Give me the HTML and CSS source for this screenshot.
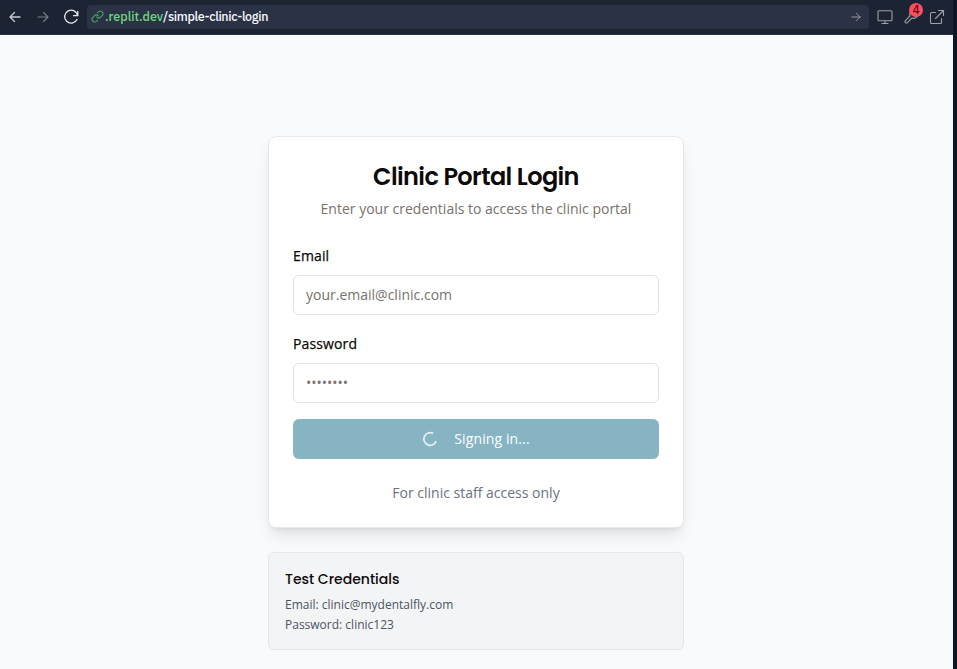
FILE: index.html
```html
<!DOCTYPE html>
<html lang="en">
<head>
<meta charset="utf-8">
<title>Clinic Portal Login</title>
<link rel="stylesheet" href="styles.css">
</head>
<body>
<div class="window">
  <header class="toolbar">
    <svg class="icon back" width="12" height="12" viewBox="0 0 12 12"><path d="M11 6H1M5.500 1.500L1 6l4.500 4.500"/></svg>
    <svg class="icon forward" width="12" height="12" viewBox="0 0 12 12"><path d="M1 6h10M6.500 1.500L11 6l-4.500 4.500"/></svg>
    <svg class="icon reload" width="16" height="16" viewBox="0 0 16 16"><path d="M14.800 2.500v4.200h-4.200M14.600 6.600A6.500 6.500 0 1 0 14 10.500"/></svg>
    <div class="address">
      <svg class="icon link" width="13" height="13" viewBox="0 0 24 24"><path d="M10 13a5 5 0 0 0 7.500.5l3.500-3.500a5 5 0 0 0-7-7l-2 2M14 11a5 5 0 0 0-7.500-.5L3 14a5 5 0 0 0 7 7l2-2"/></svg>
      <span class="url"><span class="domain">.replit.dev</span><span class="path">/simple-clinic-login</span></span>
      <svg class="icon go" width="10" height="10" viewBox="0 0 12 12"><path d="M1 6h10M6.500 1.500L11 6l-4.500 4.500"/></svg>
    </div>
    <svg class="icon monitor" width="16" height="16" viewBox="0 0 16 16"><rect x="1" y="1.800" width="14" height="10" rx="1"/><path d="M8 12v2.500M5 14.500h6"/></svg>
    <span class="tools">
      <svg class="icon" width="16" height="16" viewBox="0 0 24 24"><path d="M14.700 6.300a1 1 0 0 0 0 1.400l1.600 1.600a1 1 0 0 0 1.400 0l3.800-3.800a6 6 0 0 1-7.900 7.900l-6.900 6.900a2.100 2.100 0 0 1-3-3l6.900-6.900a6 6 0 0 1 7.900-7.900z"/></svg>
      <span class="badge">4</span>
    </span>
    <svg class="icon external" width="16" height="16" viewBox="0 0 16 16"><path d="M6.500 3.500h-4a1 1 0 0 0-1 1v9a1 1 0 0 0 1 1h9a1 1 0 0 0 1-1v-4M9.500 1.500h5v5M14 2L6.500 9.500"/></svg>
  </header>
  <main class="page">
    <section class="card">
      <h1 class="title">Clinic Portal Login</h1>
      <p class="subtitle">Enter your credentials to access the clinic portal</p>
      <form class="form">
        <div class="field">
          <label for="email">Email</label>
          <input id="email" type="email" placeholder="your.email@clinic.com">
        </div>
        <div class="field">
          <label for="password">Password</label>
          <input id="password" type="password" placeholder="••••••••">
        </div>
        <button class="submit" type="button">
          <svg class="spinner" width="16" height="16" viewBox="0 0 16 16"><path d="M11.200 2.500A6.300 6.300 0 1 0 14.100 10"/></svg>
          <span>Signing in...</span>
        </button>
      </form>
      <p class="note">For clinic staff access only</p>
    </section>
    <section class="credentials">
      <h2>Test Credentials</h2>
      <p>Email: clinic@mydentalfly.com</p>
      <p>Password: clinic123</p>
    </section>
  </main>
</div>
</body>
</html>
```
FILE: styles.css
```css
* { box-sizing: border-box; }
body {
  margin: 0;
  height: 669px;
  overflow: hidden;
  background: #0e1525;
  font-family: "Open Sans", sans-serif;
  font-size: 14px;
  line-height: 20px;
}
h1, h2, p { margin: 0; }
.window { width: 953px; height: 669px; display: flex; flex-direction: column; background: #f9fafb; }

.toolbar {
  height: 35px;
  flex: none;
  display: flex;
  align-items: center;
  padding: 0 8px 1px 9px;
  background: #1c2333;
  border-bottom: 1px solid #2b3245;
}
.icon { flex: none; fill: none; stroke: #9da2a6; stroke-width: 1.1; stroke-linecap: round; stroke-linejoin: round; }
.back { stroke: #c7ccd3; stroke-width: 1.3; }
.forward { margin-left: 16px; stroke: #777d88; }
.reload { margin-left: 14px; stroke: #e8ebee; stroke-width: 1.3; }
.address {
  display: flex;
  align-items: center;
  width: 782px;
  height: 24px;
  margin-left: 8px;
  padding: 0 8px 0 4px;
  border-radius: 4px;
  background: #2b3245;
}
.link { stroke: #4ca765; stroke-width: 2; }
.url { flex: 1; padding: 0 0 2px 1px; font: 500 12.5px/20px "IBM Plex Sans", Inter, sans-serif; }
.domain { color: #6cd97e; }
.path { color: #f5f9fc; letter-spacing: -.35px; }
.monitor { margin-left: 8px; }
.tools { position: relative; display: flex; margin-left: 10px; }
.tools .icon { stroke-width: 1.700; }
.badge {
  position: absolute;
  left: 6px;
  top: -6px;
  width: 14px;
  height: 14px;
  border-radius: 50%;
  background: #ff4f5e;
  color: #5c0710;
  font: 500 12px/14px "IBM Plex Sans", Inter, sans-serif;
  text-align: center;
}
.external { margin-left: 10px; }

.page { width: 416px; margin: 101px 0 0 268px; }
.card {
  height: 392px;
  padding: 24px;
  border: 1px solid #e5e7eb;
  border-radius: 8px;
  background: #fff;
  box-shadow: 0 10px 15px -3px rgba(0, 0, 0, .1), 0 4px 6px -4px rgba(0, 0, 0, .1);
}
.title, .credentials h2 { font-family: Poppins, Inter, sans-serif; color: #0c0a09; }
.title { font-size: 24px; line-height: 32px; font-weight: 600; letter-spacing: -.6px; text-align: center; white-space: nowrap; }
.subtitle { margin-top: 6px; color: #78716c; text-align: center; }
.form { margin-top: 27px; display: flex; flex-direction: column; gap: 19px; }
.field { display: flex; flex-direction: column; gap: 9px; }
.field label { color: #0c0a09; font-weight: 500; letter-spacing: .12px; -webkit-text-stroke: .25px; }
.field input {
  height: 40px;
  padding: 7px 12px 9px;
  border: 1px solid #e2e2e4;
  border-radius: 6px;
  background: #fff;
  font: 14px/20px "Open Sans", sans-serif;
}
.field input::placeholder { color: #78716c; opacity: 1; }
.submit {
  height: 40px;
  margin-top: -3px;
  display: flex;
  align-items: center;
  justify-content: center;
  gap: 16px;
  border: 0;
  border-radius: 6px;
  background: #86b4c3;
  color: #fff;
  font: 500 14px/20px "Open Sans", sans-serif;
  letter-spacing: .12px;
}
.spinner { fill: none; stroke: #e3eff3; stroke-width: 1.8; }
.note { margin-top: 24px; color: #6b7280; text-align: center; }

.credentials {
  height: 98px;
  margin-top: 24px;
  padding: 16px;
  border: 1px solid #e5e7eb;
  border-radius: 6px;
  background: #f3f4f6;
  color: #4b5563;
  font-size: 12px;
}
.credentials h2 { margin-bottom: 6px; font-size: 14px; line-height: 20px; font-weight: 500; }
```
